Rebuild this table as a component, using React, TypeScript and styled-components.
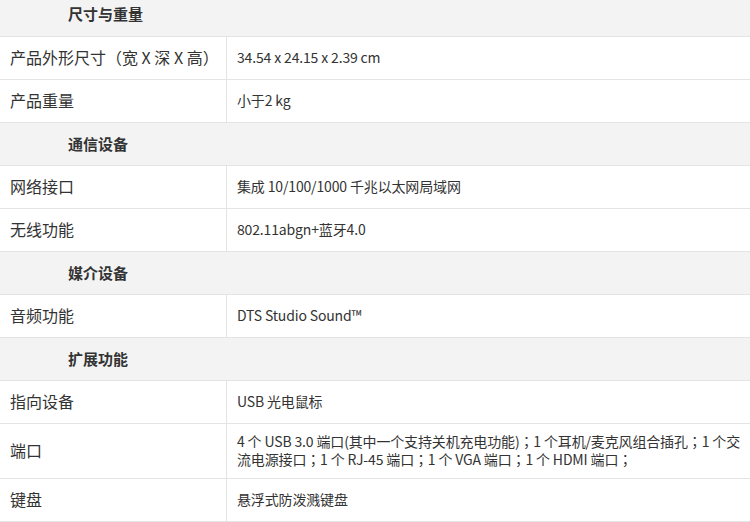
import styled, { createGlobalStyle } from 'styled-components';

interface SpecItem {
  label: string;
  value: string;
}

interface SpecGroup {
  title: string;
  items: SpecItem[];
}

const specGroups: SpecGroup[] = [
  {
    title: '尺寸与重量',
    items: [
      { label: '产品外形尺寸（宽 X 深 X 高）', value: '34.54 x 24.15 x 2.39 cm' },
      { label: '产品重量', value: '小于2 kg' },
    ],
  },
  {
    title: '通信设备',
    items: [
      { label: '网络接口', value: '集成 10/100/1000 千兆以太网局域网' },
      { label: '无线功能', value: '802.11abgn+蓝牙4.0' },
    ],
  },
  {
    title: '媒介设备',
    items: [{ label: '音频功能', value: 'DTS Studio Sound™' }],
  },
  {
    title: '扩展功能',
    items: [
      { label: '指向设备', value: 'USB 光电鼠标' },
      {
        label: '端口',
        value:
          '4 个 USB 3.0 端口(其中一个支持关机充电功能)；1 个耳机/麦克风组合插孔；1 个交流电源接口；1 个 RJ-45 端口；1 个 VGA 端口；1 个 HDMI 端口；',
      },
      { label: '键盘', value: '悬浮式防泼溅键盘' },
    ],
  },
];

// 全角标点居中显示
const withPunct = (text: string) =>
  text.split(/([；（）])/).map((part, i) => (/^[；（）]$/.test(part) ? <Punct key={i}>{part}</Punct> : part));

const App = () => {
  return (
    <>
      <GlobalStyle />
      <SpecTable>
        {specGroups.map((group) => (
          <section key={group.title}>
            <GroupTitle>{group.title}</GroupTitle>
            {group.items.map((item) => (
              <SpecRow key={item.label}>
                <LabelCell>
                  <span>{withPunct(item.label)}</span>
                </LabelCell>
                <ValueCell>
                  <span>{withPunct(item.value)}</span>
                </ValueCell>
              </SpecRow>
            ))}
          </section>
        ))}
      </SpecTable>
    </>
  );
};
export default App;

const GlobalStyle = createGlobalStyle`
  html, body {
    margin: 0;
    padding: 0;
    background: #ffffff;
    overflow: hidden;
  }
  body {
    font-family: 'Noto Sans CJK SC', 'Noto Sans', sans-serif;
    color: #333333;
  }
`;

const SpecTable = styled.div`
  width: 750px;
  margin-top: -7px;
`;

const GroupTitle = styled.h3`
  margin: 0;
  height: 44px;
  box-sizing: border-box;
  display: flex;
  align-items: center;
  padding: 0 0 2px 68px;
  background: #f3f3f3;
  border-bottom: 1px solid #e4e4e4;
  font-size: 15px;
  font-weight: 700;
  color: #333333;
  section + section & {
    height: 43px;
  }
`;

const SpecRow = styled.div`
  display: grid;
  grid-template-columns: 227px 1fr;
  min-height: 42px;
  border-bottom: 1px solid #e4e4e4;
`;

const LabelCell = styled.div`
  display: flex;
  align-items: center;
  padding: 0 10px 2px;
  border-right: 1px solid #e4e4e4;
  font-size: 16px;
  white-space: nowrap;
  color: #333333;
`;

const ValueCell = styled.div`
  display: flex;
  align-items: center;
  padding: 8px 10px 10px;
  font-size: 14px;
  line-height: 18px;
  letter-spacing: -0.15px;
  color: #333333;
`;

const Punct = styled.span`
  font-family: 'Noto Sans CJK TC', 'Noto Sans CJK SC', sans-serif;
`;
